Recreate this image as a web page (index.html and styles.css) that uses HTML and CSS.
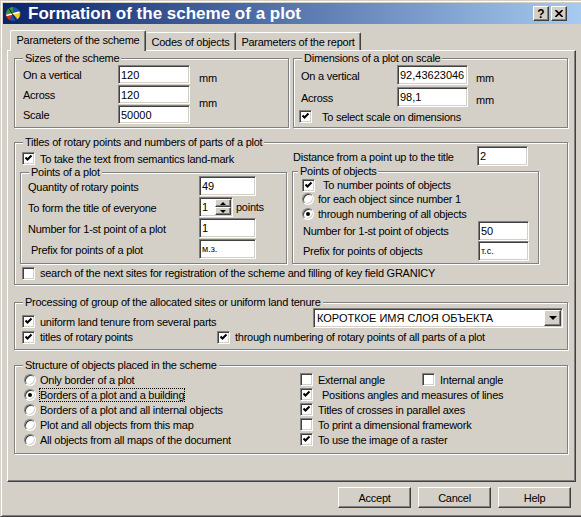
FILE: index.html
```html
<!DOCTYPE html>
<html lang="en">
<head>
    <meta charset="UTF-8">
    <title>Formation of the scheme of a plot</title>
    <link rel="stylesheet" href="styles.css">
</head>
<body>
<div class="window">
    <div class="titlebar">
        <svg class="app-icon" width="16" height="16" viewBox="0 0 16 16">
            <circle cx="8" cy="8" r="7.5" fill="#1f4fb0"/>
            <path d="M8 8 L8 0.5 A7.5 7.5 0 0 0 0.5 8 Z" fill="#2f9a3c"/>
            <path d="M8 8 L0.5 8 A7.5 7.5 0 0 0 4 14.5 Z" fill="#d62a1e"/>
            <path d="M8 8 L15.5 6 A7.5 7.5 0 0 1 13 13.5 Z" fill="#f2cf1a"/>
            <path d="M1 9.5 L15 6" stroke="#fff" stroke-width="1.6"/>
            <path d="M4 2.5 L11 14" stroke="#111" stroke-width="1"/>
            <circle cx="8" cy="8" r="7.5" fill="none" stroke="#102040" stroke-width="0.8"/>
        </svg>
        <span class="title">Formation of the scheme of a plot</span>
        <div class="caption-buttons">
            <span class="cap-btn">?</span>
            <span class="cap-btn">
                <svg width="8" height="7" viewBox="0 0 8 7"><path d="M0.5 0 L7.5 7 M7.5 0 L0.5 7" stroke="#000" stroke-width="1.6"/></svg>
            </span>
        </div>
    </div>

    <div class="tabs">
        <div class="tab active">Parameters of the scheme</div>
        <div class="tab t2">Codes of objects</div>
        <div class="tab t3">Parameters of the report</div>
    </div>

    <div class="panel">
        <div class="row-top">
            <div class="group g-sizes">
                <div class="legend">Sizes of the scheme</div>
                <div class="sizes-grid">
                    <span>On a vertical</span><span class="field">120</span><span class="unit u1">mm</span>
                    <span>Across</span><span class="field">120</span><span class="unit u2">mm</span>
                    <span>Scale</span><span class="field">50000</span>
                </div>
            </div>
            <div class="group g-dims">
                <div class="legend">Dimensions of a plot on scale</div>
                <div class="dims-grid">
                    <span>On a vertical</span><span class="field">92,43623046</span><span class="unit">mm</span>
                    <span>Across</span><span class="field">98,1</span><span class="unit">mm</span>
                </div>
                <div class="opt dims-check">
                    <span class="check"><svg width="9" height="9" viewBox="0 0 9 9"><path d="M1.5 3.5 L3.5 5.5 L7.5 1.5" fill="none" stroke="#000" stroke-width="2"/></svg></span>
                    <span>To select scale on dimensions</span>
                </div>
            </div>
        </div>

        <div class="group g-titles">
            <div class="legend">Titles of rotary points and numbers of parts of a plot</div>
            <div class="row-a">
                <div class="opt take-text">
                    <span class="check"><svg width="9" height="9" viewBox="0 0 9 9"><path d="M1.5 3.5 L3.5 5.5 L7.5 1.5" fill="none" stroke="#000" stroke-width="2"/></svg></span>
                    <span>To take the text from semantics land-mark</span>
                </div>
                <div class="distance">
                    <span class="distance-lbl">Distance from a point up to the title</span>
                    <span class="field w51">2</span>
                </div>
            </div>
            <div class="row-b">
                <div class="group sub-plot">
                    <div class="legend">Points of a plot</div>
                    <div class="plot-grid">
                        <span>Quantity of rotary points</span><span class="field">49</span>
                        <span>To form the title of everyone</span>
                        <span class="spin-cell">
                            <span class="field spin">1
                                <span class="spin-btns">
                                    <span class="spin-btn"><i class="tri-up"></i></span>
                                    <span class="spin-btn"><i class="tri-down"></i></span>
                                </span>
                            </span>
                            <span>points</span>
                        </span>
                        <span>Number for 1-st point of a plot</span><span class="field">1</span>
                        <span class="indent">Prefix for points of a plot</span><span class="field small">м.з.</span>
                    </div>
                </div>
                <div class="group sub-objects">
                    <div class="legend near">Points of objects</div>
                    <div class="opt obj-check">
                        <span class="check"><svg width="9" height="9" viewBox="0 0 9 9"><path d="M1.5 3.5 L3.5 5.5 L7.5 1.5" fill="none" stroke="#000" stroke-width="2"/></svg></span>
                        <span>To number points of objects</span>
                    </div>
                    <div class="opt radio-row r1"><span class="radio"></span><span>for each object since number 1</span></div>
                    <div class="opt radio-row r2"><span class="radio on"></span><span>through numbering of all objects</span></div>
                    <div class="obj-grid">
                        <span>Number for 1-st point of objects</span><span class="field">50</span>
                        <span>Prefix for points of objects</span><span class="field small">т.с.</span>
                    </div>
                </div>
            </div>
            <div class="opt search-row">
                <span class="check"></span>
                <span>search of the next sites for registration of the scheme and filling of key field GRANICY</span>
            </div>
        </div>

        <div class="group g-process">
            <div class="legend">Processing of group of the allocated sites or uniform land tenure</div>
            <div class="process-grid">
                <div class="opt uniform">
                    <span class="check"><svg width="9" height="9" viewBox="0 0 9 9"><path d="M1.5 3.5 L3.5 5.5 L7.5 1.5" fill="none" stroke="#000" stroke-width="2"/></svg></span>
                    <span>uniform land tenure from several parts</span>
                </div>
                <div class="combo">
                    <span class="combo-text">КОРОТКОЕ ИМЯ СЛОЯ ОБЪЕКТА</span>
                    <span class="drop"><i class="tri-down big"></i></span>
                </div>
                <div class="opt">
                    <span class="check"><svg width="9" height="9" viewBox="0 0 9 9"><path d="M1.5 3.5 L3.5 5.5 L7.5 1.5" fill="none" stroke="#000" stroke-width="2"/></svg></span>
                    <span>titles of rotary points</span>
                </div>
                <div class="opt through">
                    <span class="check"><svg width="9" height="9" viewBox="0 0 9 9"><path d="M1.5 3.5 L3.5 5.5 L7.5 1.5" fill="none" stroke="#000" stroke-width="2"/></svg></span>
                    <span>through numbering of rotary points of all parts of a plot</span>
                </div>
            </div>
        </div>

        <div class="group g-structure">
            <div class="legend">Structure of objects placed in the scheme</div>
            <div class="structure">
                <div class="col-left">
                    <div class="opt radio-opt"><span class="radio"></span><span>Only border of a plot</span></div>
                    <div class="opt radio-opt"><span class="radio on"></span><span class="focus">Borders of a plot and a building</span></div>
                    <div class="opt radio-opt"><span class="radio"></span><span>Borders of a plot and all internal objects</span></div>
                    <div class="opt radio-opt"><span class="radio"></span><span>Plot and all objects from this map</span></div>
                    <div class="opt radio-opt"><span class="radio"></span><span>All objects from all maps of the document</span></div>
                </div>
                <div class="col-right">
                    <div class="pair">
                        <div class="opt check-opt angle"><span class="check"></span><span>External angle</span></div>
                        <div class="opt check-opt"><span class="check"></span><span>Internal angle</span></div>
                    </div>
                    <div class="opt check-opt">
                        <span class="check"><svg width="9" height="9" viewBox="0 0 9 9"><path d="M1.5 3.5 L3.5 5.5 L7.5 1.5" fill="none" stroke="#000" stroke-width="2"/></svg></span>
                        <span class="lead">Positions angles and measures of lines</span>
                    </div>
                    <div class="opt check-opt">
                        <span class="check"><svg width="9" height="9" viewBox="0 0 9 9"><path d="M1.5 3.5 L3.5 5.5 L7.5 1.5" fill="none" stroke="#000" stroke-width="2"/></svg></span>
                        <span>Titles of crosses in parallel axes</span>
                    </div>
                    <div class="opt check-opt"><span class="check"></span><span>To print a dimensional framework</span></div>
                    <div class="opt check-opt">
                        <span class="check"><svg width="9" height="9" viewBox="0 0 9 9"><path d="M1.5 3.5 L3.5 5.5 L7.5 1.5" fill="none" stroke="#000" stroke-width="2"/></svg></span>
                        <span>To use the image of a raster</span>
                    </div>
                </div>
            </div>
        </div>
    </div>

    <div class="footer">
        <button class="btn">Accept</button>
        <button class="btn">Cancel</button>
        <button class="btn">Help</button>
    </div>
</div>
</body>
</html>
```

FILE: styles.css
```css
* {
    box-sizing: border-box;
}

body {
    margin: 0;
    width: 581px;
    height: 517px;
    overflow: hidden;
    background-color: #d4d0c8;
    font-family: "Liberation Sans", Arial, sans-serif;
    font-size: 11px;
    letter-spacing: -0.25px;
    color: #000;
}

.window {
    width: 581px;
    height: 517px;
    border: 1px solid;
    border-color: #d4d0c8 transparent #404040 #d4d0c8;
    border-right: 0;
    box-shadow: inset 1px 1px #fff, inset 0 -1px #808080;
    padding: 2px 0 0 2px;
}

/* title bar */
.titlebar {
    height: 21px;
    display: flex;
    align-items: center;
    padding-left: 2px;
    background: linear-gradient(to right, #0a246a, #a6caf0);
}

.app-icon {
    flex: none;
}

.title {
    margin-left: 7px;
    color: #fff;
    font-weight: bold;
    font-size: 17px;
    letter-spacing: 0;
    white-space: nowrap;
}

.caption-buttons {
    margin-left: auto;
    margin-right: 14px;
    display: flex;
    gap: 2px;
}

.cap-btn {
    width: 16px;
    height: 15px;
    display: flex;
    align-items: center;
    justify-content: center;
    background-color: #d4d0c8;
    border: 1px solid;
    border-color: #fff #404040 #404040 #fff;
    box-shadow: inset -1px -1px #808080;
    font-weight: bold;
    font-size: 12px;
    letter-spacing: 0;
    line-height: 1;
}

/* tabs */
.tabs {
    display: flex;
    align-items: flex-end;
    height: 20px;
    margin-top: 6px;
    padding-left: 7px;
}

.tab {
    position: relative;
    z-index: 1;
    height: 18px;
    display: flex;
    align-items: center;
    justify-content: center;
    border: 1px solid;
    border-color: #fff #404040 transparent #fff;
    border-bottom: 0;
    border-radius: 2px 2px 0 0;
    box-shadow: inset -1px 0 #808080;
    background-color: #d4d0c8;
    white-space: nowrap;
}

.tab.active {
    width: 136px;
    height: 21px;
    margin-bottom: -1px;
    padding-bottom: 2px;
}

.tab.t2 {
    width: 90px;
    border-left: 0;
}

.tab.t3 {
    width: 125px;
    border-left: 0;
}

/* tab panel */
.panel {
    margin-left: 4px;
    width: 569px;
    height: 432px;
    border: 1px solid;
    border-color: #fff #404040 #404040 #fff;
    box-shadow: inset -1px -1px #808080;
    padding: 7px 7px 0 6px;
}

.group {
    border: 1px solid #808080;
    box-shadow: inset 1px 1px #fff, 1px 1px #fff;
}

.legend {
    width: max-content;
    margin: -7px 0 0 8px;
    padding: 0 2px;
    line-height: 13px;
    background-color: #d4d0c8;
    white-space: nowrap;
}

.legend.near {
    margin-left: 5px;
}

.field {
    display: flex;
    align-items: center;
    height: 20px;
    padding-left: 2px;
    background-color: #fff;
    border: 1px solid;
    border-color: #808080 #fff #fff #808080;
    box-shadow: inset 1px 1px #404040, inset -1px -1px #d4d0c8;
    letter-spacing: 0;
    white-space: nowrap;
}

.field.small {
    font-size: 9px;
}

.opt {
    display: flex;
    align-items: center;
    gap: 5px;
    white-space: nowrap;
}

.check {
    flex: none;
    width: 13px;
    height: 13px;
    display: flex;
    align-items: center;
    justify-content: center;
    background-color: #fff;
    border: 1px solid;
    border-color: #808080 #fff #fff #808080;
    box-shadow: inset 1px 1px #404040, inset -1px -1px #d4d0c8;
}

.radio {
    flex: none;
    width: 12px;
    height: 12px;
    display: flex;
    align-items: center;
    justify-content: center;
    border-radius: 50%;
    background-color: #fff;
    border: 1px solid;
    border-color: #808080 #fff #fff #808080;
    box-shadow: inset 1px 1px #404040, inset -1px -1px #d4d0c8;
}

.radio.on::after {
    content: "";
    width: 4px;
    height: 4px;
    border-radius: 50%;
    background-color: #000;
}

/* top row */
.row-top {
    display: flex;
    gap: 4px;
}

.g-sizes,
.g-dims {
    width: 275px;
    height: 70px;
}

.sizes-grid {
    display: grid;
    grid-template-columns: 95px 72px auto;
    grid-template-rows: 20px 20px 20px;
    align-items: center;
    margin-left: 8px;
}

.sizes-grid .field {
    height: 19px;
    align-self: start;
}

.unit {
    margin-left: 9px;
}

.u1 {
    align-self: end;
    margin-bottom: 1px;
}

.u2 {
    grid-row: span 2;
    margin-bottom: 4px;
}

.dims-grid {
    display: grid;
    grid-template-columns: 96px 71px auto;
    grid-template-rows: 22px 22px;
    align-items: center;
    margin-left: 7px;
}

.dims-grid .field {
    align-self: start;
}

.dims-grid .unit {
    margin-left: 8px;
    margin-top: 4px;
}

.dims-check {
    height: 15px;
    margin-left: 5px;
    gap: 10px;
}

/* titles group */
.g-titles {
    margin-top: 14px;
    height: 143px;
}

.row-a {
    display: flex;
    height: 21px;
    margin-top: -3px;
}

.take-text {
    width: 278px;
    padding-left: 7px;
    padding-top: 4px;
}

.distance {
    display: flex;
    align-items: center;
}

.distance-lbl {
    width: 184px;
    white-space: nowrap;
}

.w51 {
    width: 51px;
    align-self: flex-start;
}

.row-b {
    display: flex;
    align-items: flex-start;
    margin-top: 5px;
}

.sub-plot {
    margin-left: 5px;
    width: 267px;
    height: 92px;
}

.plot-grid {
    display: grid;
    grid-template-columns: 171px 57px;
    grid-auto-rows: 21px;
    align-items: center;
    margin: -3px 0 0 7px;
    white-space: nowrap;
}

.plot-grid .field {
    align-self: start;
}

.indent {
    padding-left: 3px;
}

.spin-cell {
    display: flex;
    align-items: center;
    gap: 3px;
    align-self: start;
    width: 80px;
}

.field.spin {
    flex: none;
    width: 34px;
    padding-right: 1px;
}

.spin-btns {
    margin-left: auto;
    display: flex;
    flex-direction: column;
    width: 16px;
    height: 16px;
}

.spin-btn {
    flex: 1;
    display: flex;
    align-items: center;
    justify-content: center;
    background-color: #d4d0c8;
    border: 1px solid;
    border-color: #fff #404040 #404040 #fff;
    box-shadow: inset -1px -1px #808080;
}

.tri-up {
    width: 0;
    height: 0;
    border-left: 3px solid transparent;
    border-right: 3px solid transparent;
    border-bottom: 3px solid #000;
}

.tri-down {
    width: 0;
    height: 0;
    border-left: 3px solid transparent;
    border-right: 3px solid transparent;
    border-top: 3px solid #000;
}

.tri-down.big {
    border-left-width: 4px;
    border-right-width: 4px;
    border-top-width: 4px;
}

.sub-objects {
    margin-left: 5px;
    margin-top: -1px;
    width: 247px;
    height: 93px;
}

.obj-check {
    height: 14px;
    margin-left: 9px;
    gap: 8px;
}

.radio-row {
    margin-left: 9px;
    gap: 4px;
}

.radio-row.r1 {
    height: 14px;
}

.radio-row.r2 {
    height: 15px;
}

.obj-grid {
    display: grid;
    grid-template-columns: 175px 51px;
    grid-auto-rows: 20px;
    align-items: center;
    margin-left: 10px;
    white-space: nowrap;
}

.search-row {
    height: 18px;
    padding-left: 7px;
}

/* processing group */
.g-process {
    margin-top: 17px;
    height: 48px;
}

.process-grid {
    display: grid;
    grid-template-columns: 195px 96px 250px;
    grid-template-rows: 21px 16px;
    margin: -1px 0 0 7px;
}

.uniform {
    grid-column: 1 / 3;
    align-self: end;
    margin-bottom: 1px;
}

.through {
    grid-column: 2 / 4;
}

.combo {
    display: flex;
    align-items: center;
    height: 20px;
    padding-left: 3px;
    background-color: #fff;
    border: 1px solid;
    border-color: #808080 #fff #fff #808080;
    box-shadow: inset 1px 1px #404040, inset -1px -1px #d4d0c8;
}

.combo-text {
    font-size: 11px;
    letter-spacing: 0;
    white-space: nowrap;
}

.drop {
    margin-left: auto;
    margin-right: 1px;
    width: 17px;
    height: 16px;
    display: flex;
    align-items: center;
    justify-content: center;
    background-color: #d4d0c8;
    border: 1px solid;
    border-color: #fff #404040 #404040 #fff;
    box-shadow: inset -1px -1px #808080;
}

/* structure group */
.g-structure {
    margin-top: 15px;
    height: 89px;
}

.structure {
    display: flex;
}

.col-left {
    width: 285px;
    padding-left: 9px;
}

.radio-opt {
    height: 15px;
    gap: 4px;
}

.check-opt {
    height: 15px;
}

.pair {
    display: flex;
}

.angle {
    width: 122px;
}

.lead {
    padding-left: 4px;
}

.focus {
    outline: 1px dotted #000;
    outline-offset: 0;
}

/* buttons */
.footer {
    display: flex;
    justify-content: flex-end;
    gap: 7px;
    margin-top: 5px;
    padding-right: 10px;
}

.btn {
    width: 73px;
    height: 21px;
    padding: 0;
    font-family: inherit;
    font-size: 11px;
    letter-spacing: -0.25px;
    color: #000;
    background-color: #d4d0c8;
    border: 1px solid;
    border-color: #fff #404040 #404040 #fff;
    box-shadow: inset -1px -1px #808080;
}
```
